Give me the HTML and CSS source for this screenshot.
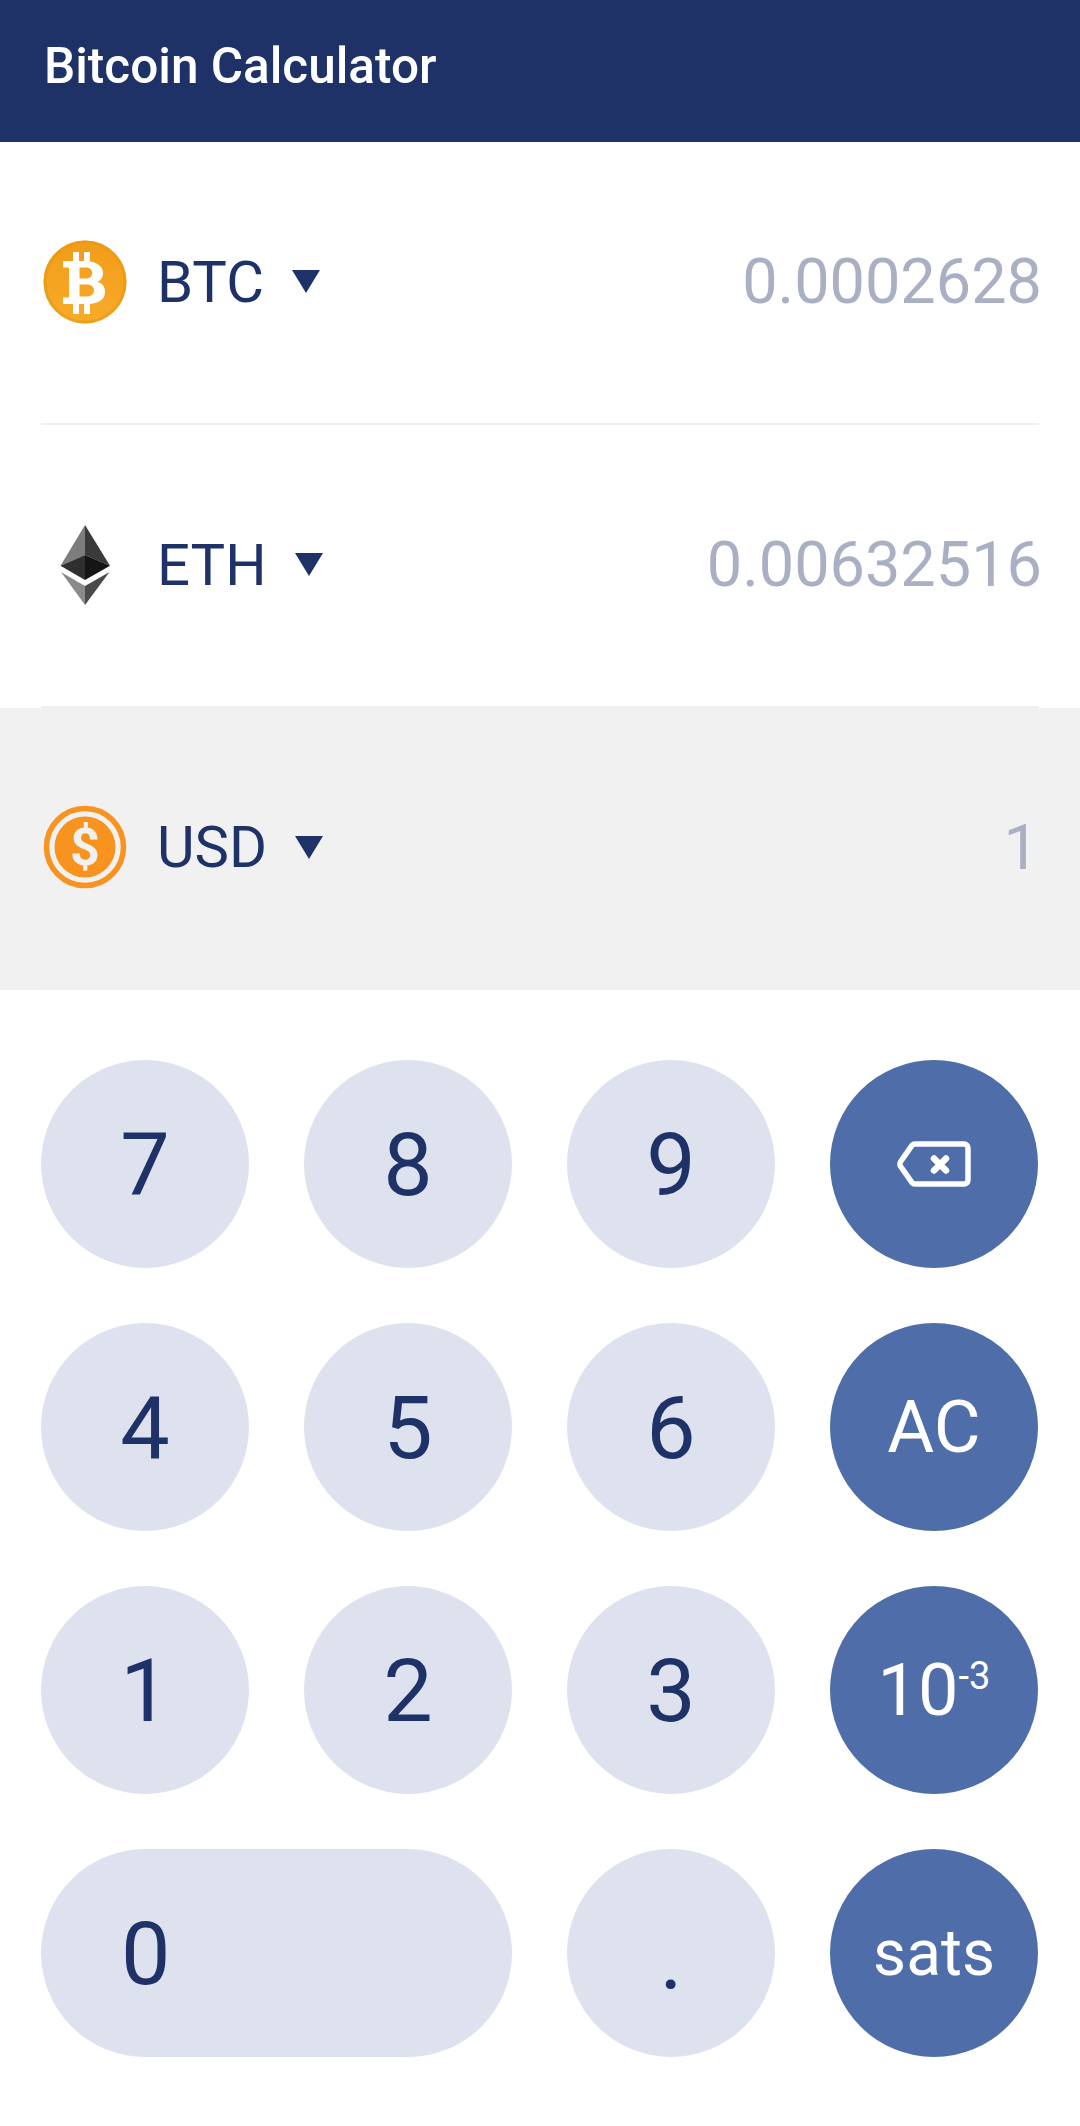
FILE: index.html
```html
<!DOCTYPE html>
<html lang="en">

<head>
    <meta charset="UTF-8">
    <title>Bitcoin Calculator</title>
    <link rel="stylesheet" href="styles.css">
</head>

<body>
    <header class="app-bar">Bitcoin Calculator</header>

    <section class="rows">
        <div class="row">
            <div class="row-inner">
                <svg class="coin" viewBox="0 0 84 84">
                    <defs>
                        <linearGradient id="btcFill" x1="0" y1="0" x2="0" y2="1">
                            <stop offset="0" stop-color="#f29c18" />
                            <stop offset="1" stop-color="#f8ab2a" />
                        </linearGradient>
                    </defs>
                    <circle cx="42" cy="42" r="41.500" fill="url(#btcFill)" />
                    <circle cx="42" cy="42" r="40" fill="none" stroke="#e8980f" stroke-width="3" opacity=".6" />
                    <path fill="#fff" d="M30 12h6v9h5v-9h6v9.400c8 1.200 13 5.300 13 11.600 0 4.300-2 7.300-5.500 8.800 4.900 1.400 7.500 5 7.500 10 0 7.300-5.700 11.600-15 12.200v10h-6v-10h-5v10h-6v-10H20v-6.500h4.500c1 0 1.500-.5 1.500-1.500V29c0-1-.5-1.500-1.500-1.500H20V21h10zM36.500 27.500v11h6c4.300 0 6.700-2 6.700-5.500s-2.400-5.500-6.700-5.500zm0 17v12h7c4.800 0 7.500-2.200 7.500-6s-2.700-6-7.500-6z" />
                </svg>
                <span class="code">BTC</span>
                <span class="caret"></span>
                <span class="amount">0.0002628</span>
            </div>
        </div>
        <div class="row">
            <div class="row-inner">
                <svg class="coin" viewBox="0 0 84 84">
                    <polygon points="42,2 42,32 17.500,42.700" fill="#7d7d7d" />
                    <polygon points="42,2 42,32 67,42.700" fill="#3a3a3a" />
                    <polygon points="17.500,42.700 42,32 42,57" fill="#2f2f2f" />
                    <polygon points="67,42.700 42,32 42,57" fill="#151515" />
                    <polygon points="18,49 42,63 42,82" fill="#8a8a8a" />
                    <polygon points="66.500,49 42,63 42,82" fill="#4a4a4a" />
                </svg>
                <span class="code">ETH</span>
                <span class="caret"></span>
                <span class="amount">0.00632516</span>
            </div>
        </div>
        <div class="row row-active">
            <div class="row-inner">
                <svg class="coin" viewBox="0 0 84 84">
                    <circle cx="42" cy="42" r="38.500" fill="none" stroke="#f7931e" stroke-width="5.500" />
                    <circle cx="42" cy="42" r="30.500" fill="#f7931e" />
                    <text class="coin-dollar" x="42" y="60" text-anchor="middle">$</text>
                </svg>
                <span class="code">USD</span>
                <span class="caret"></span>
                <span class="amount amount-one">1</span>
            </div>
        </div>
    </section>

    <section class="keypad">
        <div class="key">7</div>
        <div class="key">8</div>
        <div class="key">9</div>
        <div class="key key-fn">
            <svg class="back-icon" viewBox="0 0 74 46">
                <path d="M18 3H67a4 4 0 0 1 4 4V39a4 4 0 0 1-4 4H18a4 4 0 0 1-3-1.300L4 26a4.500 4.500 0 0 1 0-6L15 4.300A4 4 0 0 1 18 3z" fill="none" stroke="#fff" stroke-width="5.500" stroke-linejoin="round" />
                <path d="M37 17.500l12 12M49 17.500l-12 12" fill="none" stroke="#fff" stroke-width="6.500" stroke-linecap="round" />
            </svg>
        </div>
        <div class="key">4</div>
        <div class="key">5</div>
        <div class="key">6</div>
        <div class="key key-fn">AC</div>
        <div class="key">1</div>
        <div class="key">2</div>
        <div class="key">3</div>
        <div class="key key-fn">10<sup class="exp">-3</sup></div>
        <div class="key key-wide">0</div>
        <div class="key key-dot">.</div>
        <div class="key key-fn key-sats">sats</div>
    </section>
</body>

</html>
```

FILE: styles.css
```css
* {
    box-sizing: border-box;
}

body {
    margin: 0;
    background-color: #fff;
    font-family: Roboto, "Liberation Sans", sans-serif;
    color: #1f3268;
}

.app-bar {
    display: flex;
    align-items: center;
    height: 142px;
    padding-left: 44px;
    padding-bottom: 10px;
    background-color: #1f3268;
    color: #fff;
    font-size: 49.500px;
    font-weight: 500;
}

.row {
    height: 283px;
    padding: 0 41px;
}

.row-active {
    height: 282px;
    background-color: #f1f1f2;
}

.row-inner {
    display: flex;
    align-items: center;
    height: 100%;
    padding-bottom: 2px;
    border-bottom: 2px solid #eeeeee;
}

.coin {
    flex: none;
    width: 84px;
    height: 84px;
    margin-left: 2px;
}

.code {
    margin-left: 30px;
    font-size: 58px;
}

.caret {
    width: 0;
    height: 0;
    margin-left: 28px;
    border-left: 14px solid transparent;
    border-right: 14px solid transparent;
    border-top: 23px solid #1f3268;
}

.amount {
    margin-left: auto;
    margin-right: -3px;
    color: #a9b0c3;
    font-size: 63px;
}

.amount-one {
    margin-right: 0;
}

.coin-dollar {
    fill: #f1f1f2;
    font-family: Roboto, sans-serif;
    font-size: 52px;
    font-weight: 700;
}

.keypad {
    display: grid;
    grid-template-columns: repeat(4, 208px);
    grid-auto-rows: 208px;
    gap: 55px;
    padding: 70px 0 0 41px;
}

.key {
    display: flex;
    justify-content: center;
    align-items: center;
    border-radius: 104px;
    background-color: #dde2ee;
    font-size: 88px;
}

.key-fn {
    background-color: #4f6ea9;
    color: #fff;
    font-size: 72px;
}

.key-wide {
    grid-column: span 2;
    justify-content: flex-start;
    padding-left: 80px;
}

.key-dot {
    padding-top: 8px;
}

.key-sats {
    font-size: 64px;
}

.back-icon {
    width: 74px;
    height: 46px;
}

.exp {
    margin-top: -28px;
    font-size: 38px;
    line-height: 1;
}
```
